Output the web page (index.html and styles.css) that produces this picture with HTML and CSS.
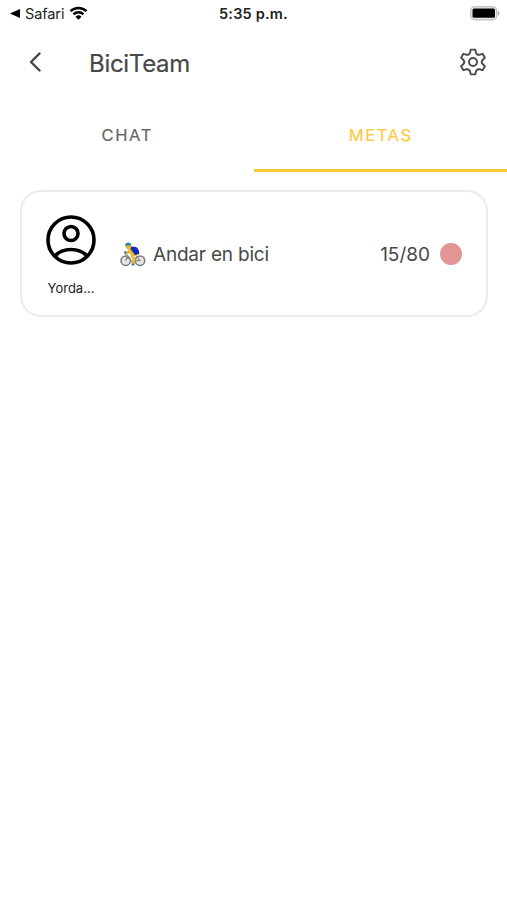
FILE: index.html
```html
<!DOCTYPE html>
<html lang="es">
<head>
  <meta charset="UTF-8">
  <meta name="viewport" content="width=device-width, initial-scale=1.0">
  <title>BiciTeam</title>
  <link rel="stylesheet" href="styles.css">
</head>
<body>

  <div class="status-bar">
    <div class="status-left">
      <svg class="back-app" viewBox="0 0 10 9"><path d="M10 0v9L0 4.5z"/></svg>
      <span>Safari</span>
      <svg class="wifi" viewBox="0 0 18 14">
        <path d="M1 5.2a11.5 11.5 0 0 1 16 0M4 8.3a7.2 7.2 0 0 1 10 0" fill="none" stroke="#000" stroke-width="2.5"/>
        <path d="M6 10.7a4.3 4.3 0 0 1 6 0l-3 3z"/>
      </svg>
    </div>
    <span class="time">5:35 p.m.</span>
    <svg class="battery" viewBox="0 0 30 15">
      <rect x=".7" y=".7" width="26" height="13" rx="4" fill="#eee" stroke="#c4c4c4" stroke-width="1.4"/>
      <path d="M27.8 5v4.6c2-.8 2-3.8 0-4.6z" fill="#aaa"/>
      <rect x="2.5" y="2.6" width="22.5" height="9.2" rx="1.5"/>
    </svg>
  </div>

  <header class="header">
    <svg class="back" viewBox="0 0 12 20"><path d="M10.5 1.5L2 10l8.5 8.5"/></svg>
    <h1>BiciTeam</h1>
    <svg class="settings" viewBox="-14 -14 28 28">
      <path d="M-2.3-12.4H2.3L2.9-9.6Q3.8-6.6 6.9-7.3L9.6-8.2 11.9-4.2 9.8-2.3Q7.6 0 9.8 2.3L11.9 4.2 9.6 8.2 6.9 7.3Q3.8 6.6 2.9 9.6L2.3 12.4H-2.3L-2.9 9.6Q-3.8 6.6-6.9 7.3L-9.6 8.2-11.9 4.2-9.8 2.3Q-7.6 0-9.8-2.3L-11.9-4.2-9.6-8.2-6.9-7.3Q-3.8-6.6-2.9-9.6z"/>
      <circle r="4"/>
    </svg>
  </header>

  <nav class="tabs">
    <div class="tab">CHAT</div>
    <div class="tab active">METAS</div>
  </nav>

  <main>
    <div class="card">
      <div class="user">
        <svg class="avatar" viewBox="0 0 50 50">
          <circle cx="25" cy="25" r="23"/>
          <circle cx="25" cy="18.5" r="7"/>
          <path d="M9 41c8-8.6 24-8.6 32 0"/>
        </svg>
        <span class="name">Yorda...</span>
      </div>
      <svg class="bike" viewBox="0 0 26 26">
        <g fill="#e6e6e4" stroke="#777" stroke-width="1.5">
          <circle cx="5.7" cy="18.7" r="4.7"/>
          <circle cx="20" cy="18.7" r="4.7"/>
        </g>
        <path d="M5.7 18.7L8 12.5M7 15l5.5 5 4.5-5.5 3 4.2h-7.5" fill="none" stroke="#8b8b86" stroke-width="1.2"/>
        <path d="M5 11l4-1 2-4M10 8l3 5M17 12l-5 1 2 4-1 5" fill="none" stroke="#e8b92e" stroke-width="3" stroke-linejoin="round"/>
        <path d="M11 4.5l5 .5c2 1 3.5 4 3.2 7L15 13l-4.5-6z" fill="#1527b5"/>
        <circle cx="8.3" cy="4.3" r="2.8" fill="#e8b92e"/>
        <path d="M5 3.7C5.5-.4 10.5-.4 11.5 3.2z" fill="#2581a8"/>
        <path d="M4.5 9.5l1.5 2.700M11.5 22.5h3" stroke="#3981a1" stroke-width="1.8"/>
      </svg>
      <span class="goal">Andar en bici</span>
      <span class="progress">15/80</span>
      <span class="dot"></span>
    </div>
  </main>

</body>
</html>
```
FILE: styles.css
```css
* {
  box-sizing: border-box;
}

body {
  margin: 0;
  min-height: 100vh;
  background: #fff;
  color: #484848;
  font-family: Inter, "Liberation Sans", sans-serif;
}

svg {
  display: block;
  flex-shrink: 0;
}

.status-bar {
  display: grid;
  grid-template-columns: 1fr auto 1fr;
  align-items: center;
  height: 27px;
  padding: 0 7px 0 10px;
  color: #222;
  font-size: 14.5px;
}

.status-left {
  display: flex;
  align-items: center;
}

.status-left span {
  letter-spacing: -0.1px;
}

.back-app {
  width: 10px;
  height: 9px;
  margin-right: 5px;
}

.wifi {
  width: 19px;
  height: 14px;
  margin: -2px 0 0 5px;
}

.time {
  margin-right: 3px;
  font-weight: 600;
  letter-spacing: 0.2px;
}

.battery {
  width: 30px;
  height: 15px;
  justify-self: end;
}

.header {
  display: flex;
  align-items: center;
  height: 70px;
  padding: 0 20px 0 29px;
}

.back {
  width: 12px;
  height: 20px;
  fill: none;
  stroke: #444;
  stroke-width: 2.4;
  stroke-linecap: round;
  stroke-linejoin: round;
}

.header h1 {
  flex: 1;
  margin: 2px 0 0 48px;
  font-size: 24px;
  font-weight: 400;
  letter-spacing: -0.3px;
  -webkit-text-stroke: 0.2px #484848;
}

.settings {
  width: 28px;
  height: 28px;
  fill: none;
  stroke: #4a4a4a;
  stroke-width: 1.9;
  stroke-linejoin: round;
}

.tabs {
  display: flex;
  height: 75px;
}

.tab {
  flex: 1;
  padding-top: 28px;
  border-bottom: 3px solid transparent;
  color: #666;
  font-size: 16.5px;
  font-weight: 400;
  line-height: 20px;
  letter-spacing: 1.6px;
  text-indent: 1px;
  text-align: center;
  -webkit-text-stroke: 0.2px currentColor;
}

.tab.active {
  color: #ffca3e;
  border-bottom-color: #ffc73a;
}

.card {
  display: flex;
  align-items: center;
  height: 127px;
  margin: 18px 19px 0 20px;
  padding: 0 24px;
  border: 2px solid #ebebeb;
  border-radius: 21px;
  font-size: 19px;
}

.user {
  display: flex;
  flex-direction: column;
  align-items: center;
  width: 50px;
  margin-top: 3px;
}

.avatar {
  width: 50px;
  height: 50px;
  fill: none;
  stroke: #000;
  stroke-width: 3.6;
}

.name {
  margin-top: 15px;
  color: #222;
  font-size: 13px;
  line-height: 16px;
  white-space: nowrap;
}

.bike {
  width: 26px;
  height: 26px;
  margin: 2px 7px 0 24px;
}

.goal {
  flex: 1;
  margin-top: 2px;
  letter-spacing: -0.2px;
}

.progress {
  margin-top: 2px;
}

.dot {
  width: 22px;
  height: 22px;
  margin-left: 10px;
  border-radius: 50%;
  background: #e39494;
}
```
